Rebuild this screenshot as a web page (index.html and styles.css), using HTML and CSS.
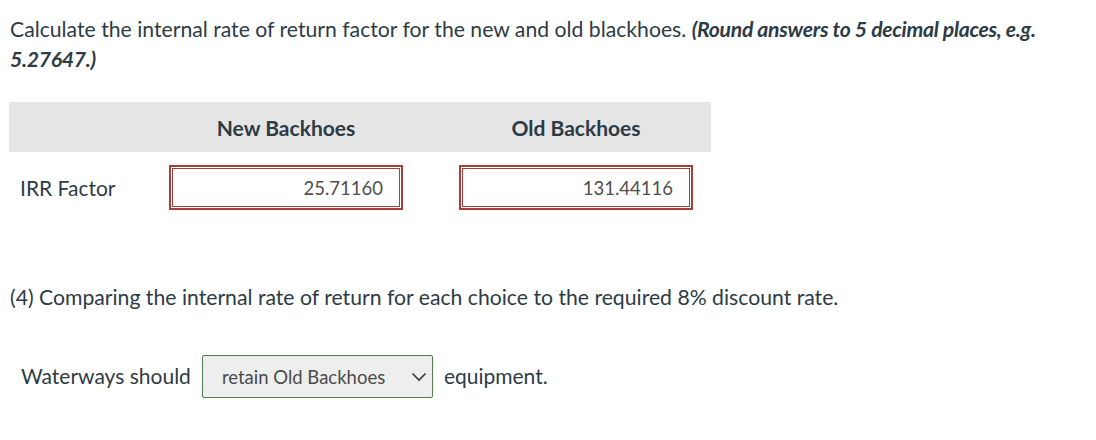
FILE: index.html
```html
<!DOCTYPE html>
<html>
<head>
<meta charset="utf-8">
<link rel="stylesheet" href="styles.css">
</head>
<body>
<div class="page">
  <p class="question">Calculate the internal rate of return factor for the new and old blackhoes. <strong><em>(Round answers to 5 decimal places, e.g. 5.27647.)</em></strong></p>

  <div class="grid">
    <div class="head head-blank"></div>
    <div class="head">New Backhoes</div>
    <div class="head"></div>
    <div class="head">Old Backhoes</div>
    <div class="head"></div>

    <div class="label">IRR Factor</div>
    <div class="answer"><span>25.71160</span></div>
    <div></div>
    <div class="answer"><span>131.44116</span></div>
    <div></div>
  </div>

  <p class="part">(4) Comparing the internal rate of return for each choice to the required 8% discount rate.</p>

  <div class="sentence">
    <span class="lead">Waterways should</span>
    <div class="select">
      <span>retain Old Backhoes</span>
      <svg class="chev" width="16" height="10" viewBox="0 0 16 10"><path d="M1.5 1.5 L8 8 L14.5 1.5" fill="none" stroke="#3a3a3a" stroke-width="1.6"/></svg>
    </div>
    <span class="tail">equipment.</span>
  </div>
</div>
</body>
</html>
```

FILE: styles.css
```css
html, body {
  margin: 0;
  padding: 0;
  background: #ffffff;
}
body {
  font-family: Lato, "Open Sans", sans-serif;
  color: #2d3b45;
}
.page {
  padding: 14px 0 0 10px;
}
.question {
  margin: 0;
  font-size: 21.2px;
  line-height: 30px;
  width: 1035px;
}
.question strong {
  font-weight: 700;
  letter-spacing: -0.3px;
}
.grid {
  margin: 28px 0 0 -1px;
  display: grid;
  grid-template-columns: 160px 234px 56px 234px 18px;
  grid-template-rows: 50px 58px;
  width: 702px;
}
.head {
  background: #e5e5e5;
  font-weight: 700;
  font-size: 21px;
  display: flex;
  align-items: center;
  justify-content: center;
  padding-top: 1px;
}
.label {
  font-size: 21px;
  padding-left: 11px;
  display: flex;
  align-items: center;
  padding-top: 13px;
}
.answer {
  margin-top: 13px;
  height: 45px;
  box-sizing: border-box;
  border: 2px solid #a3403c;
  padding: 1px;
  display: flex;
}
.answer span {
  flex: 1;
  border: 1px solid #a3403c;
  display: flex;
  align-items: center;
  justify-content: flex-end;
  padding-right: 16px;
  font-size: 18.5px;
  color: #4f4f4f;
}
.part {
  margin: 72px 0 0 0;
  font-size: 21.2px;
  line-height: 30px;
}
.sentence {
  margin-top: 43px;
  display: flex;
  align-items: center;
  font-size: 21px;
}
.lead {
  margin-left: 11px;
  margin-right: 11px;
  position: relative;
  top: -1px;
}
.select {
  width: 231px;
  height: 43px;
  box-sizing: border-box;
  border: 1px solid #4f7f4a;
  border-radius: 2px;
  background: #eeeeee;
  display: flex;
  align-items: center;
  padding-left: 19px;
  padding-right: 5px;
  font-size: 18.5px;
  color: #4b4b4b;
}
.select span {
  flex: 1;
}
.chev {
  display: block;
}
.tail {
  margin-left: 11px;
  position: relative;
  top: -1px;
}
```
